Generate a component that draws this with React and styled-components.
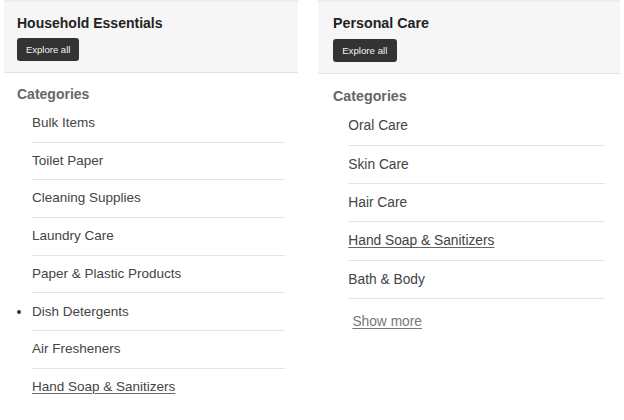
import React from 'react';
import styled, { createGlobalStyle } from 'styled-components';

const GlobalStyle = createGlobalStyle`
	html, body {
		margin: 0;
		padding: 0;
		background: #fff;
	}
	body {
		font-family: "Liberation Sans", Arial, Helvetica, sans-serif;
		color: #444;
	}
`;

const panels = [
	{
		title: 'Household Essentials',
		scale: 1,
		width: 294,
		pad: 13,
		items: [
			{ label: 'Bulk Items' },
			{ label: 'Toilet Paper' },
			{ label: 'Cleaning Supplies' },
			{ label: 'Laundry Care' },
			{ label: 'Paper & Plastic Products' },
			{ label: 'Dish Detergents', current: true },
			{ label: 'Air Fresheners' },
			{ label: 'Hand Soap & Sanitizers', link: true, last: true },
		],
	},
	{
		title: 'Personal Care',
		scale: 1.02,
		width: 302,
		pad: 15,
		showMore: true,
		items: [
			{ label: 'Oral Care' },
			{ label: 'Skin Care' },
			{ label: 'Hair Care' },
			{ label: 'Hand Soap & Sanitizers', link: true },
			{ label: 'Bath & Body' },
		],
	},
];

const px = (v) => (p) => `${(v * p.$s).toFixed(2)}px`;

const Page = styled.main`
	display: flex;
	align-items: flex-start;
	gap: 20px;
	padding-left: 4px;
`;

const Panel = styled.section`
	width: ${(p) => p.$w}px;
	flex: none;
`;

const Header = styled.header`
	background: #f6f6f6;
	border-top: 2px solid #ececec;
	border-bottom: 1px solid #e2e2e2;
	height: ${px(73)};
	box-sizing: border-box;
	padding: ${px(12)} ${(p) => p.$pad}px 0;
`;

const Title = styled.h2`
	margin: 0 0 ${px(6)};
	font-size: ${px(14)};
	line-height: ${px(18)};
	font-weight: 700;
	color: #222;
`;

const ExploreButton = styled.button`
	display: block;
	height: ${px(23)};
	padding: 0 ${px(9)};
	border: none;
	border-radius: 3px;
	background: #333;
	color: #f2f2f2;
	font-family: inherit;
	font-size: ${px(9.5)};
	cursor: pointer;
`;

const Body = styled.div`
	padding: ${px(11)} ${(p) => p.$pad}px 0;
`;

const Heading = styled.h3`
	margin: 0 0 ${px(1)};
	font-size: ${px(14)};
	line-height: ${px(20)};
	font-weight: 700;
	color: #666;
`;

const List = styled.ul`
	margin: 0;
	padding: 0 0 0 ${px(15)};
`;

const Item = styled.li`
	display: list-item;
	list-style: ${(p) => (p.$current ? 'disc' : 'none')};
	height: ${px(37.7)};
	line-height: ${px(36.7)};
	box-sizing: border-box;
	border-bottom: 1px solid ${(p) => (p.$last ? 'transparent' : '#e4e4e4')};
	font-size: ${px(13.5)};
	color: #444;
	text-decoration: ${(p) => (p.$link ? 'underline' : 'none')};
	text-underline-offset: 2px;
	text-decoration-color: #666;

	&::marker {
		color: #333;
		font-size: ${px(14)};
	}
`;

const ShowMore = styled.a`
	display: inline-block;
	margin: ${px(14)} 0 0 ${px(19)};
	font-size: ${px(13.5)};
	color: #777;
	text-decoration: underline;
	text-underline-offset: 2px;
`;

const CategoryPanel = ({ title, scale, width, pad, items, showMore }) => (
	<Panel $w={width}>
		<Header $s={scale} $pad={pad}>
			<Title $s={scale}>{title}</Title>
			<ExploreButton $s={scale}>Explore all</ExploreButton>
		</Header>
		<Body $s={scale} $pad={pad}>
			<Heading $s={scale}>Categories</Heading>
			<List $s={scale}>
				{items.map((item) => (
					<Item
						key={item.label}
						$s={scale}
						$current={item.current}
						$link={item.link}
						$last={item.last}
					>
						{item.label}
					</Item>
				))}
			</List>
			{showMore && <ShowMore $s={scale}>Show more</ShowMore>}
		</Body>
	</Panel>
);

const App = () => (
	<>
		<GlobalStyle />
		<Page>
			{panels.map((panel) => (
				<CategoryPanel key={panel.title} {...panel} />
			))}
		</Page>
	</>
);

export default App;
